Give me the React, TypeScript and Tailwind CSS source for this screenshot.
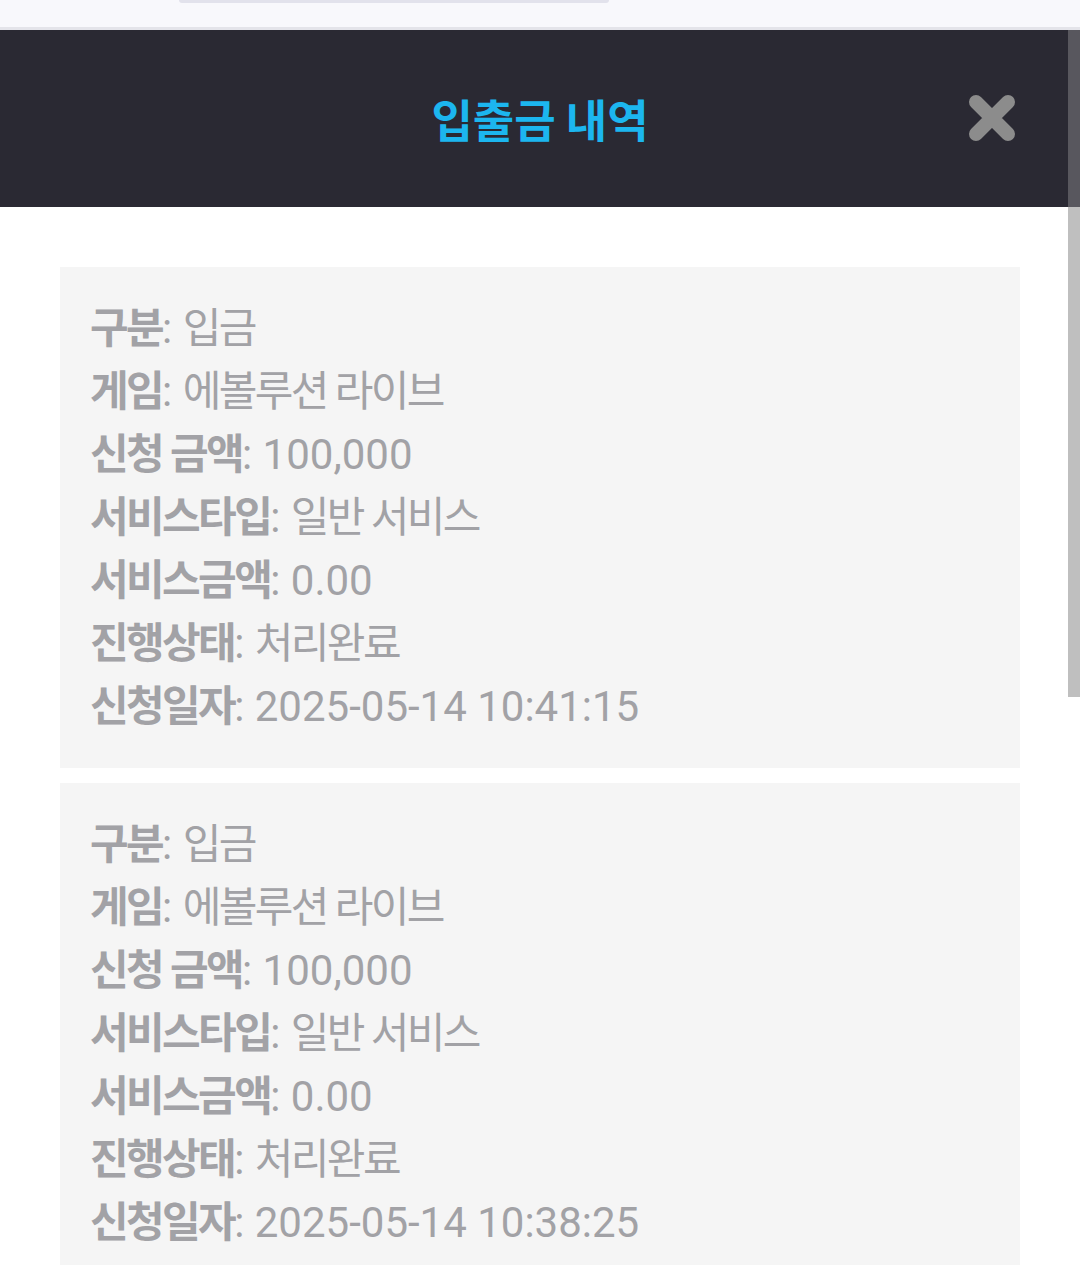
import React from 'react';

interface HistoryItem {
  kind: string;
  game: string;
  amount: string;
  serviceType: string;
  serviceAmount: string;
  status: string;
  date: string;
}

const items: HistoryItem[] = [
  {
    kind: '입금',
    game: '에볼루션 라이브',
    amount: '100,000',
    serviceType: '일반 서비스',
    serviceAmount: '0.00',
    status: '처리완료',
    date: '2025-05-14 10:41:15',
  },
  {
    kind: '입금',
    game: '에볼루션 라이브',
    amount: '100,000',
    serviceType: '일반 서비스',
    serviceAmount: '0.00',
    status: '처리완료',
    date: '2025-05-14 10:38:25',
  },
];

const hasHangul = (s: string) => /[\uac00-\ud7a3]/.test(s);

function Row({ label, value }: { label: string; value: string }) {
  // hangul in the shot is set a bit tighter than Noto's default advance
  const valueClass = hasHangul(value) ? 'tracking-[-2.6px]' : 'tracking-normal';
  return (
    <div className="whitespace-nowrap">
      <span className="font-bold tracking-[-2.6px]">{label}</span>
      <span>: </span>
      <span className={valueClass}>{value}</span>
    </div>
  );
}

function CloseIcon() {
  return (
    <svg width="50" height="50" viewBox="0 0 50 50" aria-hidden="true">
      <path
        d="M9 9 L41 41 M41 9 L9 41"
        stroke="#8c8c8c"
        strokeWidth="14"
        strokeLinecap="round"
        fill="none"
      />
    </svg>
  );
}

export default function App() {
  return (
    <div
      className="relative w-[1080px] h-[1265px] overflow-hidden bg-white"
      style={{ fontFamily: 'Roboto, "Noto Sans CJK KR", sans-serif' }}
    >
      {/* browser chrome strip */}
      <div className="h-[30px] bg-[#f8f8fc] border-b-[3px] border-[#e4e4ea] flex justify-center">
        <div className="w-[430px] h-[3px] rounded-b-full bg-[#e2e2ec] -translate-x-[146px]" />
      </div>

      {/* modal header */}
      <div className="relative h-[177px] bg-[#2a2933] flex items-center justify-center">
        <h1
          className="text-[45px] font-bold text-[#1cb6ef] leading-none"
          style={{ fontFamily: '"Noto Sans CJK KR", sans-serif' }}
        >
          입출금 내역
        </h1>
        <button className="absolute right-[63px] top-[63px]">
          <CloseIcon />
        </button>
      </div>

      {/* list */}
      <div className="px-[60px] pt-[60px] flex flex-col gap-[15px]">
        {items.map((item, i) => (
          <div
            key={i}
            className="bg-[#f5f5f5] px-[30px] py-[30px] text-[42px] leading-[63px] text-[#a2a2a6]"
          >
            <Row label="구분" value={item.kind} />
            <Row label="게임" value={item.game} />
            <Row label="신청 금액" value={item.amount} />
            <Row label="서비스타입" value={item.serviceType} />
            <Row label="서비스금액" value={item.serviceAmount} />
            <Row label="진행상태" value={item.status} />
            <Row label="신청일자" value={item.date} />
          </div>
        ))}
      </div>

      {/* scrollbar */}
      <div className="absolute right-0 top-[30px] w-[12px] h-[177px] bg-[#58575e]" />
      <div className="absolute right-0 top-[207px] w-[12px] h-[490px] bg-[#bfbfbf]" />
    </div>
  );
}
